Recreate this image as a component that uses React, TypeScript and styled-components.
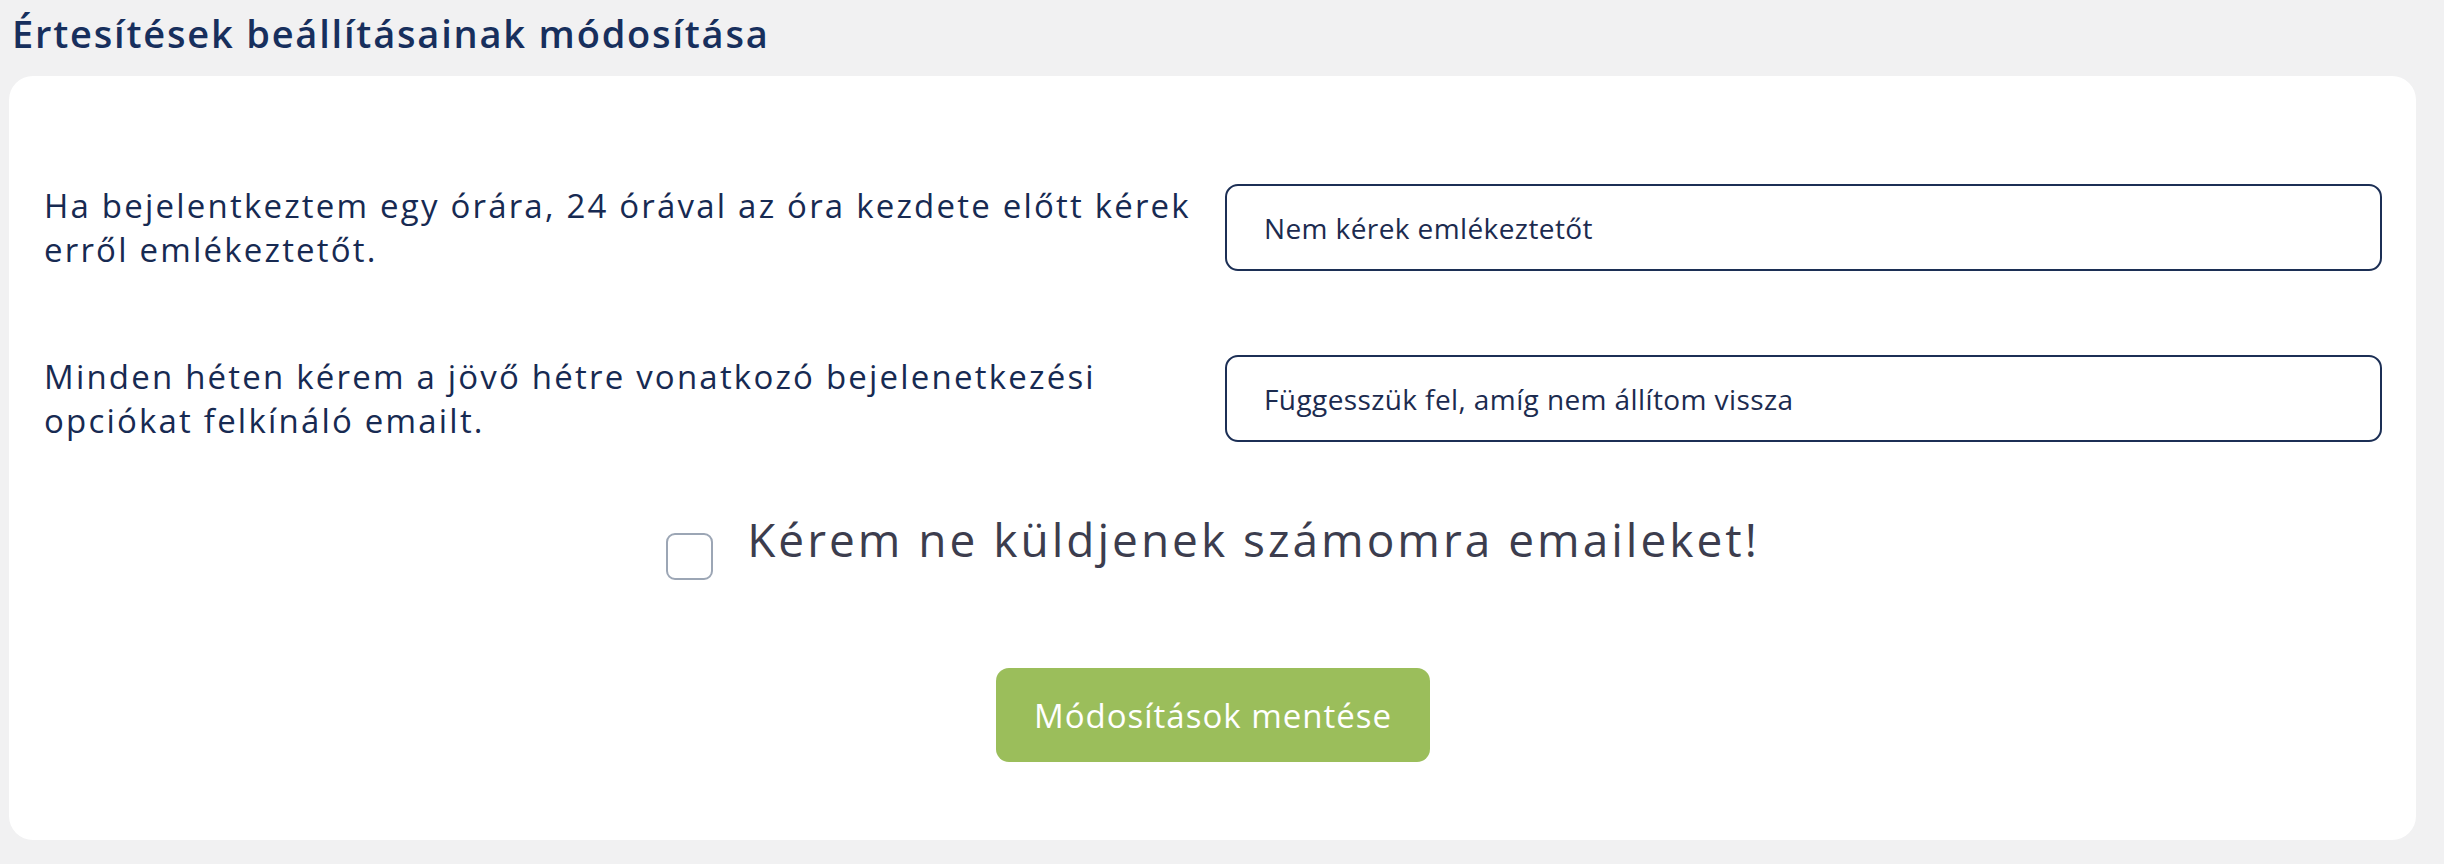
import React from "react";
import styled, { createGlobalStyle } from "styled-components";

const GlobalStyle = createGlobalStyle`
  html, body {
    margin: 0;
    padding: 0;
    background: #f1f1f2;
  }
  body {
    font-family: "Open Sans", "Noto Sans", sans-serif;
  }
  * { box-sizing: border-box; }
`;

const Page = styled.div`
  width: 2444px;
  padding: 12px 28px 20px 9px;
`;

const Title = styled.h1`
  margin: 0 0 22px 3px;
  font-size: 38px;
  line-height: 42px;
  font-weight: 600;
  letter-spacing: 1.8px;
  color: #172f5d;
`;

const Card = styled.div`
  background: #ffffff;
  border-radius: 24px;
  padding: 108px 34px 78px 35px;
  display: flex;
  flex-direction: column;
`;

const Row = styled.div`
  display: grid;
  grid-template-columns: 1fr 1fr;
  column-gap: 24px;
  align-items: center;
  margin-bottom: 84px;
`;

const Label = styled.div`
  font-size: 33px;
  line-height: 43.5px;
  font-weight: 500;
  letter-spacing: 2.2px;
  color: #172a52;
`;

const Select = styled.select`
  appearance: none;
  -webkit-appearance: none;
  height: 87px;
  width: 100%;
  border: 2px solid #1c2f55;
  border-radius: 13px;
  background: #ffffff;
  padding: 0 37px;
  font-family: inherit;
  font-size: 28px;
  font-weight: 400;
  letter-spacing: 0.4px;
  color: #1c2b4f;
  outline: none;
`;

const CheckRow = styled.label`
  display: flex;
  align-items: flex-start;
  justify-content: center;
  gap: 34px;
  margin-top: -15px;
`;

const CheckBox = styled.input`
  appearance: none;
  -webkit-appearance: none;
  margin: 22px 0 0 0;
  width: 47px;
  height: 47px;
  border: 2px solid #9ca6b5;
  border-radius: 9px;
  background: #ffffff;
  flex: none;
`;

const CheckText = styled.span`
  font-size: 46px;
  line-height: 57px;
  font-weight: 500;
  letter-spacing: 3px;
  color: #3c3d4e;
`;

const ButtonWrap = styled.div`
  display: flex;
  justify-content: center;
  margin-top: 88px;
`;

const SaveButton = styled.button`
  height: 94px;
  padding: 0 38px;
  border: none;
  border-radius: 13px;
  background: #9bbe5b;
  color: #ffffff;
  font-family: inherit;
  font-size: 33px;
  font-weight: 500;
  letter-spacing: 1px;
`;

export default function App() {
  return (
    <>
      <GlobalStyle />
      <Page>
        <Title>Értesítések beállításainak módosítása</Title>
        <Card>
          <Row>
            <Label>
              Ha bejelentkeztem egy órára, 24 órával az óra kezdete előtt kérek
              erről emlékeztetőt.
            </Label>
            <Select defaultValue="none">
              <option value="none">Nem kérek emlékeztetőt</option>
              <option value="yes">Kérek emlékeztetőt</option>
            </Select>
          </Row>
          <Row>
            <Label>
              Minden héten kérem a jövő hétre vonatkozó bejelenetkezési
              opciókat felkínáló emailt.
            </Label>
            <Select defaultValue="pause">
              <option value="pause">Függesszük fel, amíg nem állítom vissza</option>
              <option value="yes">Kérem</option>
            </Select>
          </Row>
          <CheckRow>
            <CheckBox type="checkbox" />
            <CheckText>Kérem ne küldjenek számomra emaileket!</CheckText>
          </CheckRow>
          <ButtonWrap>
            <SaveButton type="button">Módosítások mentése</SaveButton>
          </ButtonWrap>
        </Card>
      </Page>
    </>
  );
}
